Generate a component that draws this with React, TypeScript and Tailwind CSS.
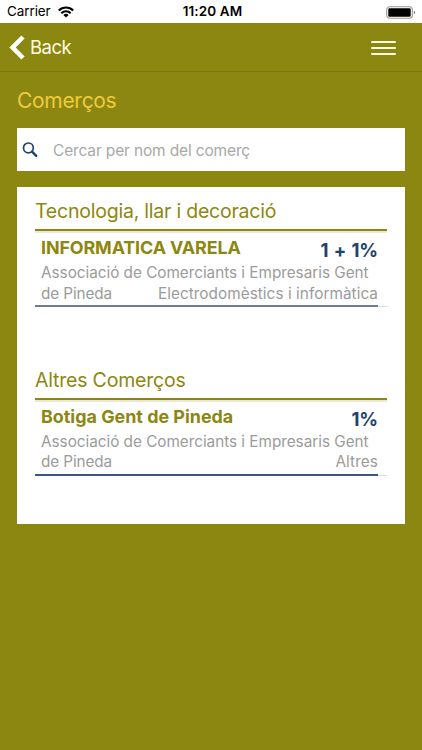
interface Shop {
    name: string;
    discount: string;
    association: string[];
    category: string;
}

interface ShopGroup {
    title: string;
    titleClass: string;
    nameClass: string;
    categoryClass: string;
    lineClass: string;
    shop: Shop;
}

const GROUPS: ShopGroup[] = [
    {
        title: 'Tecnologia, llar i decoració',
        titleClass: 'tracking-[-0.22px]',
        nameClass: 'tracking-[-0.12px]',
        categoryClass: 'tracking-[0.06px]',
        lineClass: 'border-[#6f7b94]',
        shop: {
            name: 'INFORMATICA VARELA',
            discount: '1 + 1%',
            association: ['Associació de Comerciants i Empresaris Gent', 'de Pineda'],
            category: 'Electrodomèstics i informàtica',
        },
    },
    {
        title: 'Altres Comerços',
        titleClass: 'tracking-[-0.2px]',
        nameClass: 'tracking-[0px]',
        categoryClass: 'tracking-[0.1px]',
        lineClass: 'border-[#3b5680]',
        shop: {
            name: 'Botiga Gent de Pineda',
            discount: '1%',
            association: ['Associació de Comerciants i Empresaris Gent', 'de Pineda'],
            category: 'Altres',
        },
    },
];

function StatusBar() {
    return (
        <div className="grid h-[23px] grid-cols-3 items-center bg-white pl-[7px] pr-[6px] pt-px text-black">
            <div className="flex items-center gap-[7px]">
                <span className="text-[13.5px] leading-none tracking-[-0.1px]">Carrier</span>
                <svg className="h-[12px] w-[16px]" viewBox="0 0 16 12" fill="none" stroke="currentColor">
                    <path d="M0.8 4.5a10.2 10.2 0 0 1 14.4 0" strokeWidth="2.1" />
                    <path d="M3.3 7.2a6.6 6.6 0 0 1 9.4 0" strokeWidth="2" />
                    <path d="M8 11.6L5.4 9a3.7 3.7 0 0 1 5.2 0z" fill="currentColor" stroke="none" />
                </svg>
            </div>
            <span className="pl-[2px] text-center text-[13.5px] font-semibold leading-none tracking-[0.12px] whitespace-nowrap">11:20 AM</span>
            <svg className="h-[13px] w-[30px] justify-self-end" viewBox="0 0 30 13">
                <rect x="0.7" y="0.7" width="25.6" height="11.6" rx="3" fill="white" stroke="#999" strokeWidth="1.1" />
                <rect x="2.3" y="2.3" width="22.4" height="8.4" rx="1.2" fill="black" />
                <path d="M27.8 4.6v3.8c1.8-.7 1.8-3.1 0-3.8z" fill="#888" />
            </svg>
        </div>
    );
}

function NavBar() {
    return (
        <div className="flex h-[49px] items-center justify-between border-b border-[#7a760f] pl-[9px] pr-[26px] text-[#fffde8]">
            <button className="flex items-center gap-[5px]">
                <svg className="h-[25px] w-[16px]" viewBox="0 0 16 25" fill="none" stroke="white" strokeWidth="4.6">
                    <path d="M14 2L3.6 12.5L14 23" />
                </svg>
                <span className="text-[18.5px] leading-none tracking-[-0.5px]">Back</span>
            </button>
            <button className="mt-[2px] flex w-[25px] flex-col gap-[4px]">
                <span className="h-[2px] rounded-full bg-current" />
                <span className="h-[2px] rounded-full bg-current" />
                <span className="h-[2px] rounded-full bg-current" />
            </button>
        </div>
    );
}

function SearchBox() {
    return (
        <div className="flex h-[43px] items-center bg-white pl-[5px]">
            <svg className="h-[16px] w-[16px] shrink-0" viewBox="0 0 16 16" fill="none" stroke="#1f426f">
                <circle cx="6.4" cy="5.9" r="4.9" strokeWidth="1.7" />
                <path d="M10 9.6l4.2 4.2" strokeWidth="2.4" strokeLinecap="round" />
            </svg>
            <input
                className="ml-[15px] flex-1 bg-transparent pt-[2px] text-[15.5px] tracking-[-0.15px] outline-none placeholder:text-[#a8a8a8]"
                placeholder="Cercar per nom del comerç"
            />
        </div>
    );
}

function GroupSection({ group }: { group: ShopGroup }) {
    const { shop } = group;

    return (
        <section className="h-[168.5px] px-[18px]">
            <h2 className={`h-[42px] pt-[10px] text-[19.5px] leading-[28px] text-[#8c8711] whitespace-nowrap ${group.titleClass}`}>
                {group.title}
            </h2>
            <div className="border-t-2 border-[#8c8711]">
                <div className="h-[2px] bg-[#ece8d8]" />
            </div>
            <div className="h-[74px] border-b border-[#d8dce4]">
                <div className={`mr-[9px] h-[74px] border-b-2 pl-[6px] whitespace-nowrap ${group.lineClass}`}>
                    <div className="flex h-[30px] items-start justify-between pt-[3.4px]">
                        <h3 className={`text-[17.9px] font-bold leading-[24px] text-[#8c8711] ${group.nameClass}`}>{shop.name}</h3>
                        <span className="pt-[2px] text-[18.5px] font-bold leading-[24px] tracking-[-0.1px] text-[#1f426f] [word-spacing:1px]">
                            {shop.discount}
                        </span>
                    </div>
                    <div className="text-[15.3px] leading-[20.5px] text-[#9b9b9b]">
                        <p className="tracking-[-0.02px]">{shop.association[0]}</p>
                        <div className="flex justify-between">
                            <span className="tracking-[-0.1px]">{shop.association[1]}</span>
                            <span className={group.categoryClass}>{shop.category}</span>
                        </div>
                    </div>
                </div>
            </div>
        </section>
    );
}

export default function App() {
    return (
        <div className="h-[750px] w-[422px] overflow-hidden bg-[#8c8711] font-['Inter','Liberation_Sans',sans-serif]">
            <StatusBar />
            <NavBar />
            <main className="px-[17px]">
                <h1 className="h-[56px] pt-[14px] text-[21px] leading-[30px] tracking-[-0.3px] text-[#efcb3d]">Comerços</h1>
                <SearchBox />
                <div className="mt-[16px] h-[337px] bg-white">
                    {GROUPS.map((group) => (
                        <GroupSection key={group.title} group={group} />
                    ))}
                </div>
            </main>
        </div>
    );
}
